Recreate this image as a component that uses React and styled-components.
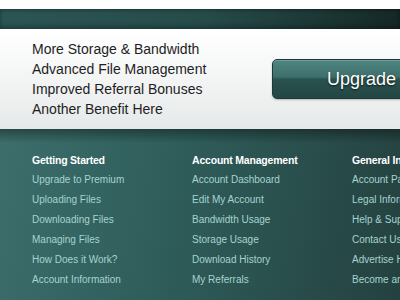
import React from "react";
import styled, { createGlobalStyle } from "styled-components";

const GlobalStyle = createGlobalStyle`
  html, body {
    margin: 0;
    padding: 0;
    background: #ffffff;
    font-family: "Liberation Sans", Arial, sans-serif;
  }
`;

const benefits = [
  "More Storage & Bandwidth",
  "Advanced File Management",
  "Improved Referral Bonuses",
  "Another Benefit Here",
];

const columns = [
  {
    title: "Getting Started",
    links: [
      "Upgrade to Premium",
      "Uploading Files",
      "Downloading Files",
      "Managing Files",
      "How Does it Work?",
      "Account Information",
    ],
  },
  {
    title: "Account Management",
    links: [
      "Account Dashboard",
      "Edit My Account",
      "Bandwidth Usage",
      "Storage Usage",
      "Download History",
      "My Referrals",
    ],
  },
  {
    title: "General Information",
    links: [
      "Account Packages",
      "Legal Information",
      "Help & Support",
      "Contact Us",
      "Advertise Here",
      "Become an Affiliate",
    ],
  },
];

export default function App() {
  return (
    <>
      <GlobalStyle />
      <Page>
        <TopBar />
        <Promo>
          <Benefits>
            {benefits.map((b) => (
              <li key={b}>{b}</li>
            ))}
          </Benefits>
          <UpgradeButton>Upgrade</UpgradeButton>
        </Promo>
        <Footer>
          {columns.map((col) => (
            <Column key={col.title}>
              <ColumnTitle>{col.title}</ColumnTitle>
              {col.links.map((l) => (
                <FooterLink key={l} href="#">
                  {l}
                </FooterLink>
              ))}
            </Column>
          ))}
        </Footer>
      </Page>
    </>
  );
}

const Page = styled.div`
  width: 400px;
  height: 300px;
  overflow: hidden;
  padding-top: 9px;
  box-sizing: border-box;
  background: #ffffff;
`;

const TopBar = styled.div`
  height: 20px;
  background: linear-gradient(90deg, #2b5553 0%, #264c4a 50%, #152826 100%);
  box-shadow: inset 0 -3px 4px rgba(0, 0, 0, 0.25), inset 0 2px 3px rgba(0, 0, 0, 0.2);
`;

const Promo = styled.div`
  height: 100px;
  display: flex;
  align-items: center;
  background: linear-gradient(180deg, #ffffff 0%, #f2f4f4 55%, #e6e9e9 100%);
  padding-left: 32px;
  box-sizing: border-box;
`;

const Benefits = styled.ul`
  list-style: none;
  margin: 0;
  padding: 0;
  flex: 0 0 240px;
  li {
    font-size: 14px;
    line-height: 20px;
    color: #1e1e1e;
  }
`;

const UpgradeButton = styled.button`
  height: 40px;
  width: 170px;
  flex-shrink: 0;
  box-sizing: border-box;
  border: 1px solid #1d3837;
  border-radius: 5px;
  padding: 0 0 0 54px;
  text-align: left;
  font-family: "Liberation Sans", Arial, sans-serif;
  font-size: 18px;
  color: #ffffff;
  text-shadow: 0 1px 2px rgba(0, 0, 0, 0.7);
  background: linear-gradient(
    180deg,
    #4f8581 0%,
    #3d6f6b 45%,
    #2a5250 50%,
    #234644 100%
  );
  box-shadow: inset 0 1px 0 rgba(255, 255, 255, 0.2), 0 1px 2px rgba(0, 0, 0, 0.25);
`;

const Footer = styled.div`
  height: 171px;
  display: flex;
  padding: 21px 0 0 32px;
  box-sizing: border-box;
  background:
    linear-gradient(180deg, rgba(0, 0, 0, 0.35) 0px, rgba(0, 0, 0, 0) 14px),
    linear-gradient(100deg, #3d6e6b 0%, #2f5e5b 40%, #24413f 100%);
`;

const Column = styled.div`
  width: 160px;
  flex-shrink: 0;
  display: flex;
  flex-direction: column;
  white-space: nowrap;
`;

const ColumnTitle = styled.div`
  font-size: 10.5px;
  font-weight: bold;
  letter-spacing: -0.2px;
  line-height: 20px;
  color: #ffffff;
`;

const FooterLink = styled.a`
  font-size: 10px;
  line-height: 20px;
  color: #a6d3cf;
  text-decoration: none;
`;
